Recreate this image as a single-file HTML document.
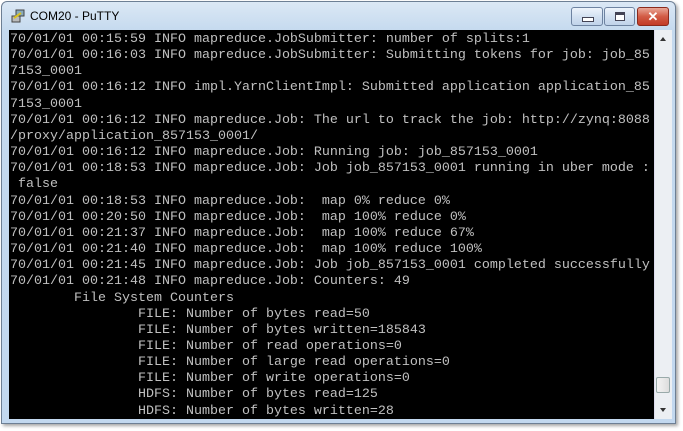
<!DOCTYPE html>
<html><head><style>
body{margin:0;width:683px;height:431px;background:#fff;position:relative;overflow:hidden;font-family:"Liberation Sans",sans-serif}
.win{position:absolute;left:1px;top:1px;width:675px;height:423px;background:linear-gradient(#dbe8f5,#c4d9ee 30px,#c2d8ef);border:1px solid #6d7f94;border-radius:6px 6px 0 0;box-sizing:border-box;box-shadow:2px 2px 3px rgba(0,0,0,.35)}
.title{position:absolute;left:30px;top:9px;font-size:12px;color:#000}
.icon{position:absolute;left:11px;top:9px;width:14px;height:14px}
.btn{position:absolute;top:7px;height:19px;border:1px solid #6e83a1;border-radius:3px;box-sizing:border-box;background:linear-gradient(#eef4fb,#d3e1f1 50%,#c0d3ea)}
.term{position:absolute;left:9px;top:30px;width:645px;height:389px;background:#000;overflow:hidden}
pre{margin:0;position:absolute;left:1px;top:2px;font-family:"Liberation Mono",monospace;font-size:13.33px;line-height:16.15px;color:#c0c0c0}
.sb{position:absolute;left:654px;top:30px;width:17px;height:389px;background:#eceff3;border-left:1px solid #dde}
.thumb{position:absolute;left:1px;top:347px;width:14px;height:16px;border:1px solid #9aa;border-radius:2px;background:linear-gradient(90deg,#f4f4f4,#ddd);box-sizing:border-box}
</style></head><body>
<div class="win"></div>
<svg class="icon" viewBox="0 0 14 14"><rect x="1" y="7" width="8" height="6" fill="#bbb" stroke="#444" stroke-width="1"/><rect x="5" y="1" width="8" height="6" fill="#8ab" stroke="#444"/><path d="M3 9 L10 4" stroke="#d8c020" stroke-width="2"/></svg>
<div class="title">COM20 - PuTTY</div>
<div class="btn" style="left:571px;width:32px"><div style="position:absolute;left:10px;top:9px;width:10px;height:3px;background:#fff;border:1px solid #445"></div></div>
<div class="btn" style="left:604px;width:31px"><div style="position:absolute;left:10px;top:4px;width:8px;height:7px;border:1px solid #445;background:#fff;box-shadow:inset 0 2px 0 #445"></div></div>
<div class="btn" style="left:637px;width:32px;border-color:#8b2a1c;background:linear-gradient(#e9a797,#d25b45 50%,#c23b26);color:#fff;font-weight:bold;font-size:13px;text-align:center;line-height:17px">✕</div>
<div class="term"><pre>70/01/01 00:15:59 INFO mapreduce.JobSubmitter: number of splits:1
70/01/01 00:16:03 INFO mapreduce.JobSubmitter: Submitting tokens for job: job_85
7153_0001
70/01/01 00:16:12 INFO impl.YarnClientImpl: Submitted application application_85
7153_0001
70/01/01 00:16:12 INFO mapreduce.Job: The url to track the job: http://zynq:8088
/proxy/application_857153_0001/
70/01/01 00:16:12 INFO mapreduce.Job: Running job: job_857153_0001
70/01/01 00:18:53 INFO mapreduce.Job: Job job_857153_0001 running in uber mode :
 false
70/01/01 00:18:53 INFO mapreduce.Job:  map 0% reduce 0%
70/01/01 00:20:50 INFO mapreduce.Job:  map 100% reduce 0%
70/01/01 00:21:37 INFO mapreduce.Job:  map 100% reduce 67%
70/01/01 00:21:40 INFO mapreduce.Job:  map 100% reduce 100%
70/01/01 00:21:45 INFO mapreduce.Job: Job job_857153_0001 completed successfully
70/01/01 00:21:48 INFO mapreduce.Job: Counters: 49
        File System Counters
                FILE: Number of bytes read=50
                FILE: Number of bytes written=185843
                FILE: Number of read operations=0
                FILE: Number of large read operations=0
                FILE: Number of write operations=0
                HDFS: Number of bytes read=125
                HDFS: Number of bytes written=28</pre></div>
<div class="sb"><div style="position:absolute;left:5px;top:7px;border:3px solid transparent;border-bottom:4px solid #333;border-top:0"></div><div class="thumb"></div><div style="position:absolute;left:5px;top:378px;border:3px solid transparent;border-top:4px solid #333;border-bottom:0"></div></div>
</body></html>
